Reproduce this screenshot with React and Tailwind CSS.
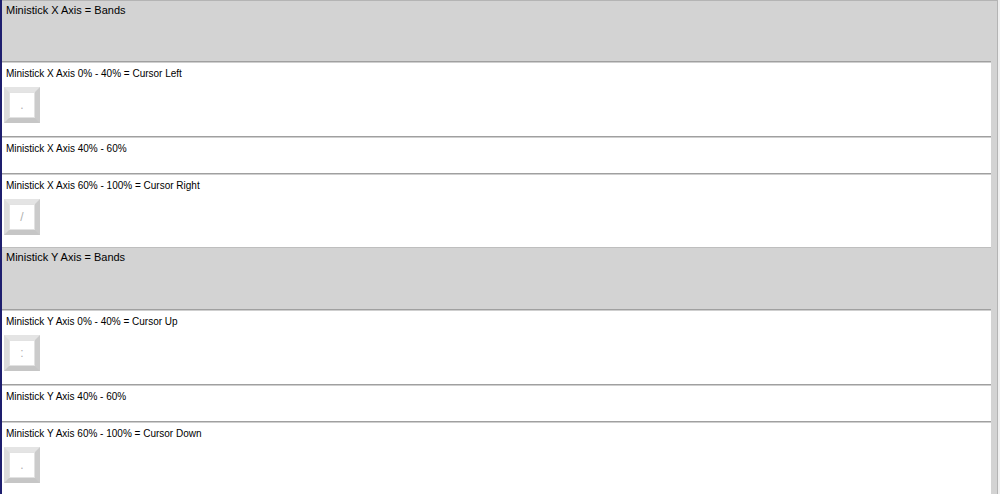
import React from "react";

const sections = [
  {
    header: "Ministick X Axis = Bands",
    headerClass: "h-[60px]",
    topLine: false,
    rows: [
      { label: "Ministick X Axis 0% - 40% = Cursor Left", key: ".", h: "h-[75px]" },
      { label: "Ministick X Axis 40% - 60%", h: "h-[37px]" },
      { label: "Ministick X Axis 60% - 100% = Cursor Right", key: "/", h: "h-[74px]" },
    ],
  },
  {
    header: "Ministick Y Axis = Bands",
    headerClass: "h-[61px]",
    topLine: true,
    rows: [
      { label: "Ministick Y Axis 0% - 40% = Cursor Up", key: ":", h: "h-[75px]" },
      { label: "Ministick Y Axis 40% - 60%", h: "h-[37px]" },
      { label: "Ministick Y Axis 60% - 100% = Cursor Down", key: ".", h: "h-[74px]" },
    ],
  },
];

function KeyCap({ glyph }) {
  return (
    <div className="ml-[2px] mt-[7px] w-[36px] h-[36px] border-[5px] border-t-[#e4e4e4] border-l-[#dbdbdb] border-r-[#cbcbcb] border-b-[#c6c6c6]">
      <div className="w-full h-full bg-white border border-[#e2e2e2] flex items-center justify-center text-[12px] leading-none text-[#b0b0b0]">
        {glyph}
      </div>
    </div>
  );
}

function Row({ row }) {
  return (
    <div
      className={`${row.h} mr-[6px] bg-white border-t border-[#a0a0a0] shadow-[inset_0_1px_0_#cfcfcf] pt-[6px] flex flex-col`}
    >
      <div className="pl-[4px] text-[10px] leading-[12px] text-black whitespace-nowrap">{row.label}</div>
      {row.key && <KeyCap glyph={row.key} />}
    </div>
  );
}

export default function App() {
  return (
    <div
      className="w-[1000px] h-[494px] overflow-hidden flex bg-white"
      style={{ fontFamily: "'Liberation Sans', Arial, sans-serif" }}
    >
      <div className="w-[2px] h-full bg-[#1e1e6e]" />
      <div className="flex-1 h-full bg-[#d3d3d3] border-t border-[#b4b4b4] flex flex-col overflow-hidden">
        {sections.map((s, i) => (
          <div key={i} className="flex flex-col">
            {s.topLine && <div className="h-px mr-[6px] bg-[#bebebe]" />}
            <div className={`${s.headerClass} pl-[4px] pt-[3px] text-[11px] leading-[13px] text-black`}>
              {s.header}
            </div>
            {s.rows.map((r, j) => (
              <Row key={j} row={r} />
            ))}
          </div>
        ))}
      </div>
      <div className="w-[3px] h-full border-l border-[#b4b4b4] bg-[#f0f0f0]" />
    </div>
  );
}
